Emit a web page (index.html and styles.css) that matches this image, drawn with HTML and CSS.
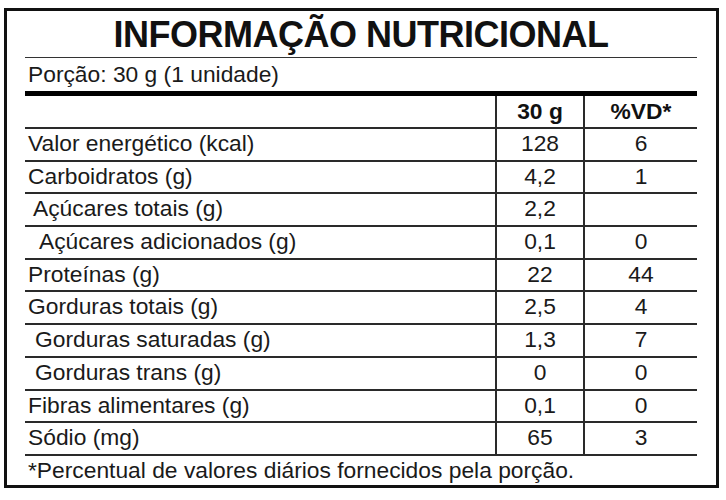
FILE: index.html
```html
<!DOCTYPE html>
<html lang="pt">
<head>
<meta charset="utf-8">
<title>Informação Nutricional</title>
<link rel="stylesheet" href="styles.css">
</head>
<body>
<div class="label">
  <h1 class="title">INFORMAÇÃO NUTRICIONAL</h1>
  <div class="portion">Porção: 30 g (1 unidade)</div>
  <div class="table">
    <div class="row head">
      <div class="name"></div>
      <div class="val">30 g</div>
      <div class="val">%VD*</div>
    </div>
    <div class="row">
      <div class="name">Valor energético (kcal)</div>
      <div class="val">128</div>
      <div class="val">6</div>
    </div>
    <div class="row">
      <div class="name">Carboidratos (g)</div>
      <div class="val">4,2</div>
      <div class="val">1</div>
    </div>
    <div class="row">
      <div class="name ind1">Açúcares totais (g)</div>
      <div class="val">2,2</div>
      <div class="val"></div>
    </div>
    <div class="row">
      <div class="name ind2">Açúcares adicionados (g)</div>
      <div class="val">0,1</div>
      <div class="val">0</div>
    </div>
    <div class="row">
      <div class="name">Proteínas (g)</div>
      <div class="val">22</div>
      <div class="val">44</div>
    </div>
    <div class="row">
      <div class="name">Gorduras totais (g)</div>
      <div class="val">2,5</div>
      <div class="val">4</div>
    </div>
    <div class="row">
      <div class="name ind1b">Gorduras saturadas (g)</div>
      <div class="val">1,3</div>
      <div class="val">7</div>
    </div>
    <div class="row">
      <div class="name ind1b">Gorduras trans (g)</div>
      <div class="val">0</div>
      <div class="val">0</div>
    </div>
    <div class="row">
      <div class="name">Fibras alimentares (g)</div>
      <div class="val">0,1</div>
      <div class="val">0</div>
    </div>
    <div class="row">
      <div class="name">Sódio (mg)</div>
      <div class="val">65</div>
      <div class="val">3</div>
    </div>
  </div>
  <div class="footer">*Percentual de valores diários fornecidos pela porção.</div>
</div>
</body>
</html>
```

FILE: styles.css
```css
html, body {
  margin: 0;
  padding: 0;
  background: #ffffff;
}

body {
  font-family: "Liberation Sans", Arial, sans-serif;
  color: #1a1a1a;
}

.label {
  box-sizing: border-box;
  width: 715px;
  height: 480px;
  margin: 8px 0 0 4px;
  border: 3px solid #111;
  padding: 0 19px 0 18px;
  display: flex;
  flex-direction: column;
}

.title {
  margin: 0;
  height: 47px;
  line-height: 47px;
  font-size: 36px;
  font-weight: bold;
  letter-spacing: -0.5px;
  text-align: center;
  color: #111;
  border-bottom: 1px solid #333;
  box-sizing: border-box;
}

.portion {
  box-sizing: border-box;
  height: 38px;
  line-height: 32px;
  font-size: 22.8px;
  padding-left: 3px;
  border-bottom: 5px solid #000;
}

.table {
  display: flex;
  flex-direction: column;
}

.row {
  display: grid;
  grid-template-columns: 470px 88px 1fr;
  box-sizing: border-box;
  height: 32.7px;
  border-bottom: 2px solid #2a2a2a;
  font-size: 22.8px;
  line-height: 29px;
}

.row.head {
  height: 33px;
  line-height: 30px;
  font-weight: bold;
  color: #111;
}

.name {
  padding-left: 3px;
  white-space: pre;
}

.name.ind1 {
  padding-left: 8px;
}

.name.ind1b {
  padding-left: 10px;
}

.name.ind2 {
  padding-left: 14px;
}

.val {
  text-align: center;
  border-left: 2px solid #2a2a2a;
}

.footer {
  flex: 1;
  font-size: 22.8px;
  line-height: 28px;
  padding-left: 3px;
  white-space: nowrap;
}
```
